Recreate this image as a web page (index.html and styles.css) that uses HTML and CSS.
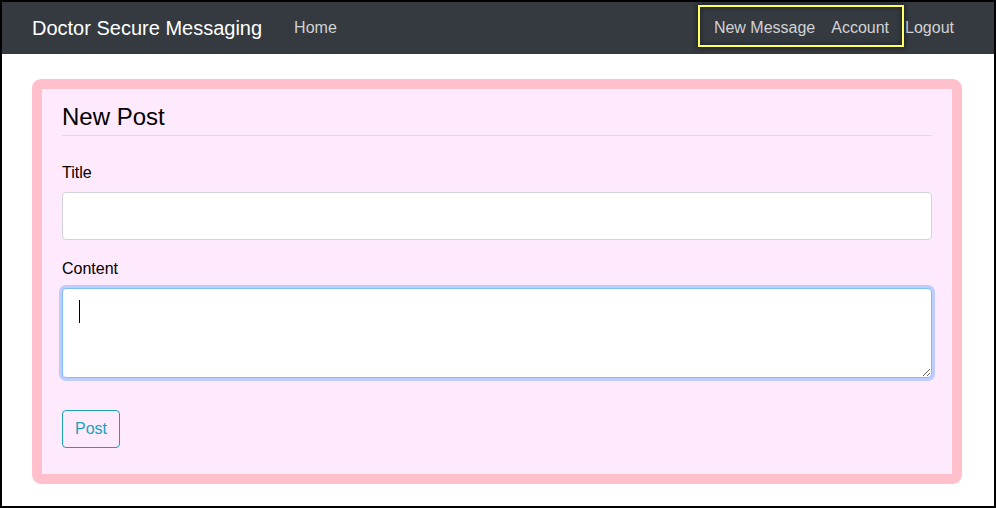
FILE: index.html
```html
<!DOCTYPE html>
<html lang="en">
<head>
<meta charset="utf-8">
<title>Doctor Secure Messaging</title>
<link rel="stylesheet" href="styles.css">
</head>
<body>
<div class="frame">
  <nav class="navbar">
    <a class="brand" href="#">Doctor Secure Messaging</a>
    <a class="nav-link" href="#">Home</a>
    <div class="nav-right">
      <div class="highlight">
        <a class="nav-link" href="#">New Message</a>
        <a class="nav-link" href="#">Account</a>
      </div>
      <a class="nav-link" href="#">Logout</a>
    </div>
  </nav>
  <main class="card">
    <h2 class="card-title">New Post</h2>
    <form class="post-form">
      <div class="form-group first">
        <label class="label" for="title">Title</label>
        <input class="form-control" id="title" type="text">
      </div>
      <div class="form-group">
        <label class="label" for="content">Content</label>
        <div class="textarea-wrap">
          <textarea class="form-control textarea focused" id="content"></textarea>
          <span class="caret"></span>
        </div>
      </div>
      <div class="actions">
        <button class="btn-outline" type="button">Post</button>
      </div>
    </form>
  </main>
</div>
</body>
</html>
```
FILE: styles.css
```css
* { box-sizing: border-box; }
html, body { margin: 0; padding: 0; }
body {
  font-family: "Liberation Sans", Arial, sans-serif;
  font-size: 16px;
  line-height: 1.5;
  color: #212529;
  background: #fff;
}
.frame {
  width: 996px;
  height: 508px;
  border: 2px solid #000;
  overflow: hidden;
  display: flex;
  flex-direction: column;
}
.navbar {
  height: 52px;
  background: #343a40;
  display: flex;
  align-items: center;
  padding: 0 32px 0 30px;
}
.brand {
  color: #fff;
  font-size: 20px;
  text-decoration: none;
  margin-right: 24px;
  line-height: 30px;
}
.nav-link {
  color: rgba(255, 255, 255, 0.78);
  text-decoration: none;
  padding: 0 8px;
  line-height: 24px;
}
.nav-right {
  margin-left: auto;
  display: flex;
  align-items: center;
}
.highlight {
  display: flex;
  position: relative;
}
.highlight::after {
  content: "";
  position: absolute;
  left: -8px;
  right: -7px;
  top: -11px;
  bottom: -7px;
  border: 2px solid #ffff66;
  box-shadow: 0 0 5px 1px rgba(0, 0, 0, 0.45), inset 0 0 5px 1px rgba(0, 0, 0, 0.35);
  pointer-events: none;
}
.card {
  margin: 25px 32px 0 30px;
  border: 10px solid #ffc0cb;
  border-radius: 9px;
  background: #ffe9fd;
  padding: 14px 20px 26px;
}
.card-title {
  margin: 0 0 25px;
  font-size: 24px;
  font-weight: 400;
  line-height: 1.2;
  color: #000;
  padding-bottom: 3px;
  border-bottom: 1px solid #e1dbe9;
}
.post-form {
  display: flex;
  flex-direction: column;
}
.form-group {
  display: flex;
  flex-direction: column;
  margin-bottom: 16px;
}
.form-group.first {
  margin-bottom: 17px;
}
.label {
  color: #000;
  margin-bottom: 7px;
}
.form-control {
  width: 100%;
  height: 48px;
  border: 1px solid #d3d3dc;
  border-radius: 4px;
  background: #fff;
  font: inherit;
  padding: 6px 12px;
  outline: none;
}
.textarea-wrap {
  position: relative;
}
.textarea {
  display: block;
  height: 90px;
  resize: vertical;
}
.focused {
  border-color: #80bdff;
  box-shadow: 0 0 0 3px rgba(0, 123, 255, 0.25);
}
.caret {
  position: absolute;
  left: 17px;
  top: 12px;
  width: 1px;
  height: 23px;
  background: #000;
}
.actions {
  padding-top: 16px;
}
.btn-outline {
  font: inherit;
  color: #17a2b8;
  background: transparent;
  border: 1px solid #17a2b8;
  border-radius: 4px;
  padding: 6px 12px;
  line-height: 24px;
  cursor: pointer;
}
```
